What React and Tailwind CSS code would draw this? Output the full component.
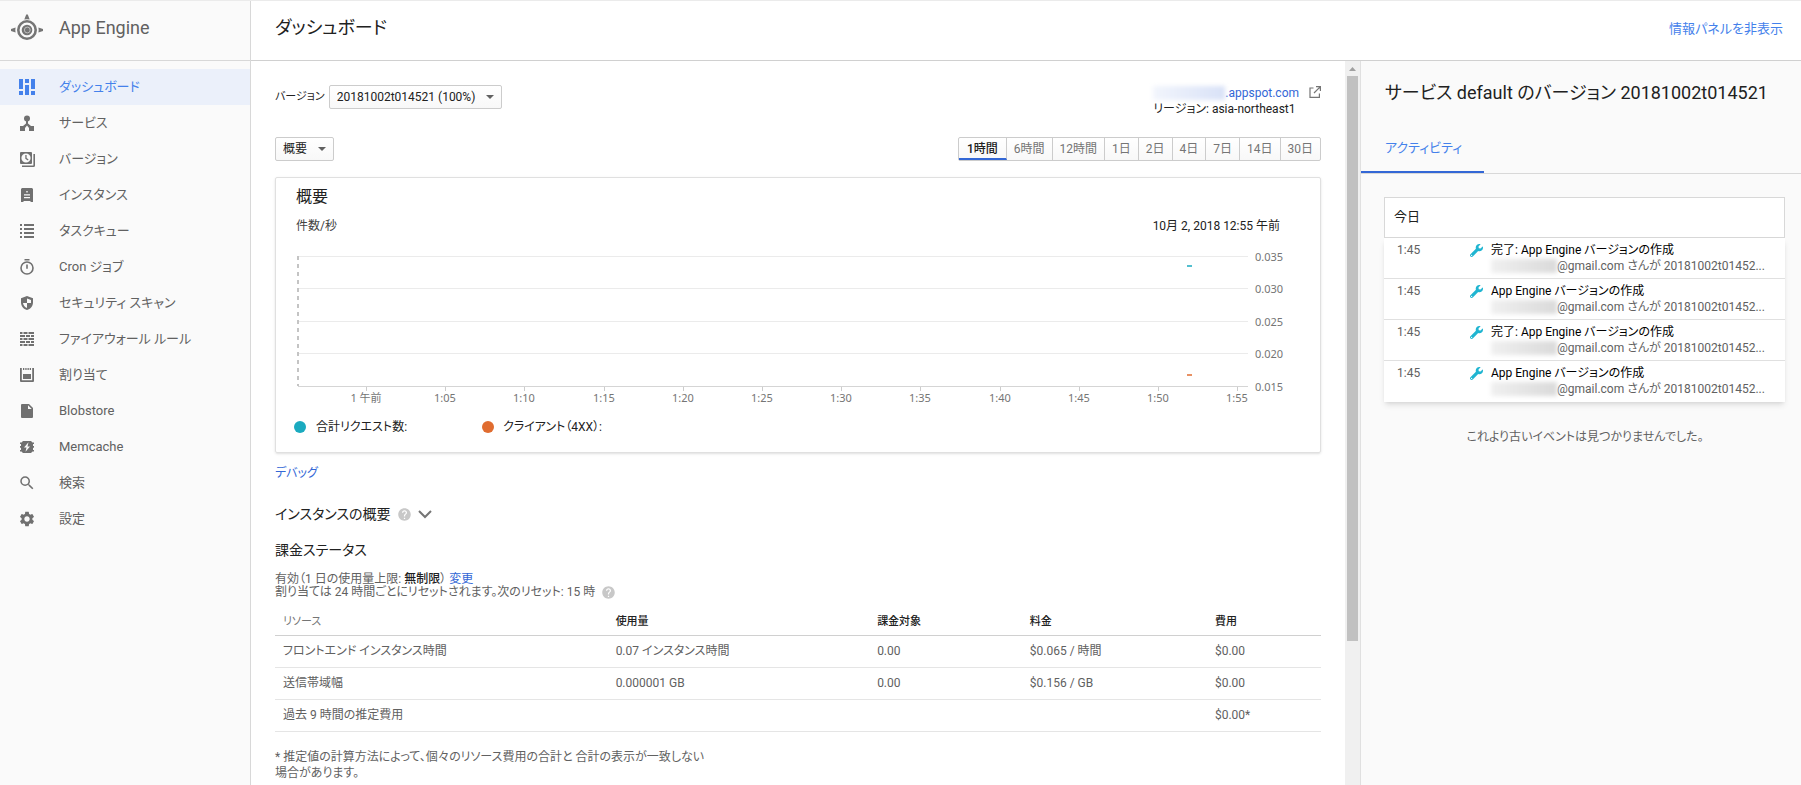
import React from 'react';
import { MdSearch, MdSettings, MdHelp } from 'react-icons/md';
import { FaWrench } from 'react-icons/fa';

function Icon({ children }) {
  return (
    <svg className="w-4 h-4 shrink-0" viewBox="0 0 16 16" fill="currentColor">
      {children}
    </svg>
  );
}

const icons = {
  dashboard: (
    <Icon>
      <path d="M0 0h4v10H0zM0 12h4v4H0zM6 0h4v4H6zM6 6h4v10H6zM12 0h4v10h-4zM12 12h4v4h-4z" />
    </Icon>
  ),
  services: (
    <Icon>
      <circle cx="8" cy="3.5" r="3" />
      <path d="M7 5.5h2v3l3 2.500h3v5h-5v-3L8 10.500 6 13v3H1v-5h3l3-2.500z" />
    </Icon>
  ),
  versions: (
    <Icon>
      <path
        fillRule="evenodd"
        d="M2 1h10a1 1 0 0 1 1 1v10a1 1 0 0 1-1 1H2a1 1 0 0 1-1-1V2a1 1 0 0 1 1-1zM7 2.4a4.6 4.6 0 1 0 0 9.2 4.6 4.6 0 0 0 0-9.2z"
      />
      <path d="M14.4 3H16v11.5a1.5 1.5 0 0 1-1.5 1.5H3v-1.6h11.4z" />
      <path d="M6.3 4h1.3v3l2 1.6-.8 1L6.3 7.7z" />
    </Icon>
  ),
  instances: (
    <Icon>
      <path
        fillRule="evenodd"
        d="M3 1h10l1 1v13h-2l-1-1H5l-1 1H2V2zM7.3 4v1.4h1.4V4zM5 7.3v1.2h6V7.3zM5 10v1.2h6V10z"
      />
    </Icon>
  ),
  queues: (
    <Icon>
      <path d="M1 1h2v2H1zM5 1h10v2H5zM1 5h2v2H1zM5 5h10v2H5zM1 9h2v2H1zM5 9h10v2H5zM1 13h2v2H1zM5 13h10v2H5z" />
    </Icon>
  ),
  cron: (
    <Icon>
      <circle cx="8" cy="9" r="6" fill="none" stroke="currentColor" strokeWidth="1.6" />
      <path d="M5.5 0h5v1.5h-5zM7.2 5.5h1.6v4.3H7.2z" />
    </Icon>
  ),
  security: (
    <Icon>
      <path
        fillRule="evenodd"
        d="M8 1l6 2.3v4.2c0 3.6-2.500 6.500-6 7.500-3.500-1-6-3.900-6-7.500V3.300zM8 3.500v4.500H4c.2 2.200 1.800 4.200 4 5V8h4V5z"
      />
    </Icon>
  ),
  firewall: (
    <Icon>
      <path d="M1 1h2.500v2H1zM4.500 1h4v2h-4zM9.500 1H15v2H9.500zM1 4h5v2H1zM7 4h4v2H7zM12 4h3v2h-3zM1 7h2.500v2H1zM4.500 7h4v2h-4zM9.500 7H15v2H9.500zM1 10h5v2H1zM7 10h4v2H7zM12 10h3v2h-3zM1 13h2.500v2H1zM4.500 13h4v2h-4zM9.500 13H15v2H9.500z" />
    </Icon>
  ),
  quotas: (
    <Icon>
      <path d="M1 1h1.800v12.200h10.400V1H15v13a1 1 0 0 1-1 1H2a1 1 0 0 1-1-1zM4 7h8v5H4zM4 1h1.300v2H4zM6.300 1h1.300v2H6.300zM8.500 1h1.300v2H8.500zM10.700 1H12v2h-1.300z" />
    </Icon>
  ),
  blobstore: (
    <Icon>
      <path fillRule="evenodd" d="M3 1h7l4 4v9a1 1 0 0 1-1 1H3a1 1 0 0 1-1-1V2a1 1 0 0 1 1-1zM9 2.300V6h3.700z" />
    </Icon>
  ),
  memcache: (
    <Icon>
      <path
        fillRule="evenodd"
        d="M4 2h8l1.500 1.500H15V5h-1v2h1v1.700h-1v2.300h1v1.500h-1.500L12 14H4l-1.500-1.500H1V11h1V8.700H1V7h1V5H1V3.500h1.500zM9.500 3.200L5 8.600h2.500l-1 4.200L11 7.400H8.500z"
      />
    </Icon>
  ),
  search: <MdSearch className="w-[18px] h-[18px] -mx-px shrink-0 stroke-current" />,
  settings: <MdSettings className="w-[18px] h-[18px] -mx-px shrink-0" />,
};

const menu = [
  { icon: 'dashboard', label: 'ダッシュボード', active: true },
  { icon: 'services', label: 'サービス' },
  { icon: 'versions', label: 'バージョン' },
  { icon: 'instances', label: 'インスタンス' },
  { icon: 'queues', label: 'タスクキュー' },
  { icon: 'cron', label: 'Cron ジョブ' },
  { icon: 'security', label: 'セキュリティ スキャン' },
  { icon: 'firewall', label: 'ファイアウォール ルール' },
  { icon: 'quotas', label: '割り当て' },
  { icon: 'blobstore', label: 'Blobstore' },
  { icon: 'memcache', label: 'Memcache' },
  { icon: 'search', label: '検索' },
  { icon: 'settings', label: '設定' },
];

const ranges = ['1時間', '6時間', '12時間', '1日', '2日', '4日', '7日', '14日', '30日'];

const yTicks = [
  { y: 8, label: '0.035' },
  { y: 40, label: '0.030' },
  { y: 73, label: '0.025' },
  { y: 105, label: '0.020' },
  { y: 138, label: '0.015' },
];

const xTicks = ['1 午前', '1:05', '1:10', '1:15', '1:20', '1:25', '1:30', '1:35', '1:40', '1:45', '1:50', '1:55'];

const resources = [
  ['フロントエンド インスタンス時間', '0.07 インスタンス時間', '0.00', '$0.065 / 時間', '$0.00'],
  ['送信帯域幅', '0.000001 GB', '0.00', '$0.156 / GB', '$0.00'],
  ['過去 9 時間の推定費用', '', '', '', '$0.00*'],
];

const events = [
  '完了: App Engine バージョンの作成',
  'App Engine バージョンの作成',
  '完了: App Engine バージョンの作成',
  'App Engine バージョンの作成',
];

function Logo() {
  return (
    <svg className="w-8 h-7 shrink-0 text-[#757575]" viewBox="0 0 32 28" fill="currentColor">
      <circle cx="16" cy="16" r="8.700" fill="none" stroke="currentColor" strokeWidth="2.600" />
      <circle cx="16" cy="16" r="5.300" />
      <circle cx="16.300" cy="16" r="2.900" fill="none" stroke="#d0d0d0" strokeWidth="0.800" />
      <path d="M15.200 0.500h1.600l1.900 5a11 11 0 0 0-5.400 0z" />
      <path d="M0 15l4.600-1.500a11 11 0 0 0 0 5L0 17z" />
      <path d="M32 15l-4.600-1.500a11 11 0 0 1 0 5L32 17z" />
    </svg>
  );
}

function Dropdown({ id, label, value }) {
  return (
    <div className="relative">
      <select
        id={id}
        aria-label={label}
        className="block appearance-none h-6 pl-[7px] pr-[25px] text-xs text-[#212121] border border-[#ccc] rounded-xs bg-linear-to-b from-white to-[#f8f8f8]"
      >
        <option>{value}</option>
      </select>
      <svg className="absolute right-2 top-[10px] w-2 h-1 pointer-events-none" viewBox="0 0 8 4">
        <path d="M0 0h8L4 4z" fill="#616161" />
      </svg>
    </div>
  );
}

function Chart() {
  return (
    <svg className="block w-full h-auto mt-[14px]" viewBox="0 0 1044 158">
      <g fontSize="11" fill="#757575" className="font-['Noto_Sans','Noto_Sans_CJK_JP',sans-serif]">
        {yTicks.map((tick) => (
          <g key={tick.label}>
            <rect x="22" y={tick.y} width="950" height="1" fill={tick.y === 138 ? '#d5d5d5' : '#ebebeb'} />
            <text x="979" y={tick.y + 5}>
              {tick.label}
            </text>
          </g>
        ))}
        {xTicks.map((label, i) => {
          const x = Math.round(90 + i * 79.2);
          return (
            <g key={label}>
              <rect x={x} y="139" width="1" height="4" fill="#ccc" />
              <text x={x} y="154" textAnchor="middle">
                {label}
              </text>
            </g>
          );
        })}
      </g>
      <path d="M22 8v130" stroke="#c4c4c4" strokeWidth="2" strokeDasharray="4 4" />
      <path d="M911 18h5" stroke="#1aaabf" strokeWidth="1.500" />
      <path d="M911 127h5" stroke="#e06c30" strokeWidth="1.500" />
    </svg>
  );
}

function Sidebar() {
  return (
    <aside className="w-[251px] shrink-0 bg-[#fafafa] border-r border-[#d8d8d8]">
      <div className="flex items-center gap-4 h-[60px] pl-[11px] pb-[6px] border-b border-[#d8d8d8]">
        <Logo />
        <h2 className="text-lg text-[#616161]">App Engine</h2>
      </div>
      <nav className="pt-2">
        {menu.map((item) => (
          <a
            key={item.label}
            href="#"
            className={
              item.active
                ? 'flex items-center gap-6 h-9 pl-[19px] pb-px text-[13px] text-[#4481eb] bg-[#ebf0fa]'
                : 'flex items-center gap-6 h-9 pl-[19px] pb-px text-[13px] text-[#616161]'
            }
          >
            <span className={item.active ? 'text-[#4481eb]' : 'text-[#707070]'}>{icons[item.icon]}</span>
            {item.label}
          </a>
        ))}
      </nav>
    </aside>
  );
}

function Billing() {
  return (
    <section>
      <h3 className="mt-4 text-sm leading-5 text-[#212121]">課金ステータス</h3>
      <div className="mt-[13px] leading-[13px]">
        <p>
          有効（1 日の使用量上限: <b className="font-medium text-[#212121]">無制限</b>）{' '}
          <a href="#" className="text-[#3367d6]">
            変更
          </a>
        </p>
        <p className="flex items-center gap-[6px]">
          割り当ては 24 時間ごとにリセットされます。次のリセット: 15 時
          <MdHelp className="w-[15px] h-[15px] -my-1 text-[#c8c8c8]" />
        </p>
      </div>
      <table className="w-full mt-[10px] table-fixed text-left">
        <colgroup>
          <col className="w-[31.8%]" />
          <col className="w-[25%]" />
          <col className="w-[14.6%]" />
          <col className="w-[17.7%]" />
          <col />
        </colgroup>
        <thead>
          <tr className="h-[26px] border-b border-[#d0d0d0] text-[11px] text-[#212121]">
            <th className="px-2 font-normal text-[#757575]">リソース</th>
            <th className="px-2 font-medium">使用量</th>
            <th className="px-2 font-medium">課金対象</th>
            <th className="px-2 font-medium">料金</th>
            <th className="px-2 font-medium">費用</th>
          </tr>
        </thead>
        <tbody>
          {resources.map((row) => (
            <tr key={row[0]} className="h-8 border-b border-[#e5e5e5]">
              {row.map((cell, i) => (
                <td key={i} className="px-2">
                  {cell}
                </td>
              ))}
            </tr>
          ))}
        </tbody>
      </table>
      <p className="mt-[17px]">
        * 推定値の計算方法によって、個々のリソース費用の合計と 合計の表示が一致しない
        <br />
        場合があります。
      </p>
    </section>
  );
}

function Dashboard() {
  return (
    <main className="flex-1 min-w-0 px-6 pt-6 pb-1 text-xs leading-4 text-[#616161]">
      <div className="flex items-start justify-between">
        <div className="flex items-center gap-1">
          <label htmlFor="version" className="text-[11px] text-[#212121]">
            バージョン
          </label>
          <Dropdown id="version" value="20181002t014521 (100%)" />
        </div>
        <div className="flex gap-[10px]">
          <div className="text-[#212121]">
            <a href="#" className="flex items-center text-[#3367d6]">
              <span className="w-[72px] h-[14px] bg-linear-to-r from-[#f2f5fc] to-[#d9e2f7] blur-[2px]" />
              .appspot.com
            </a>
            <p>リージョン: asia-northeast1</p>
          </div>
          <svg className="w-3 h-3 mt-px" viewBox="0 0 12 12" fill="none" stroke="#757575" strokeWidth="1.200">
            <path d="M4.500 2H1v9.400h9.400V7.500M7 .6h4.400V5M11.400.6L5 7" />
          </svg>
        </div>
      </div>

      <div className="flex items-center justify-between mt-5">
        <Dropdown id="metric" label="指標" value="概要" />
        <div className="flex h-6 border border-[#ccc] rounded-xs divide-x divide-[#ccc] bg-linear-to-b from-white to-[#f8f8f8]">
          {ranges.map((range, i) => (
            <button
              key={range}
              className={
                i === 0
                  ? 'px-2 pt-[2px] font-medium text-[#212121] border-b-2 border-b-[#3367d6]'
                  : 'px-[7px] text-[#757575]'
              }
            >
              {range}
            </button>
          ))}
        </div>
      </div>

      <section className="mt-4 pt-[7px] pb-[17px] border border-[#e0e0e0] rounded-xs shadow-sm">
        <h3 className="px-5 text-base leading-6 text-[#212121]">概要</h3>
        <div className="flex justify-between mt-[9px] pl-5 pr-10 text-[#424242]">
          <span>件数/秒</span>
          <span className="text-[#212121]">10月 2, 2018 12:55 午前</span>
        </div>
        <Chart />
        <div className="flex mt-[13px] pl-[18px] text-[#212121]">
          <span className="flex items-center gap-[10px] w-[188px]">
            <i className="w-3 h-3 rounded-full bg-[#1aaabf]" />
            合計リクエスト数:
          </span>
          <span className="flex items-center gap-[9px]">
            <i className="w-3 h-3 rounded-full bg-[#e06c30]" />
            クライアント（4XX）:
          </span>
        </div>
      </section>

      <a href="#" className="block mt-3 text-[#3367d6]">
        デバッグ
      </a>

      <div className="flex items-center gap-[6px] mt-[23px]">
        <h3 className="text-sm leading-5 text-[#212121]">インスタンスの概要</h3>
        <MdHelp className="w-[15px] h-[15px] text-[#c8c8c8]" />
        <svg className="w-[14px] h-[14px]" viewBox="0 0 14 14" fill="none" stroke="#757575" strokeWidth="2">
          <path d="M1 4l6 6 6-6" />
        </svg>
      </div>

      <Billing />
    </main>
  );
}

function Scrollbar() {
  return (
    <div className="flex flex-col items-center w-[15px] shrink-0 bg-[#f0f0f0]">
      <svg className="w-[7px] h-[15px] shrink-0" viewBox="0 0 7 15">
        <path d="M0 10h7L3.500 6z" fill="#a0a0a0" />
      </svg>
      <div className="w-[11px] h-[78%] bg-[#c1c1c1]" />
    </div>
  );
}

function InfoPanel() {
  return (
    <aside className="w-[441px] shrink-0 border-l border-[#e0e0e0] bg-[#fafafa] text-xs leading-4">
      <h2 className="pt-5 pl-6 text-lg leading-6 text-[#212121]">サービス default のバージョン 20181002t014521</h2>
      <div className="flex mt-5 border-b border-[#d8d8d8]">
        <button className="h-12 pl-6 pr-[22px] text-[13px] text-[#4481eb] border-b-2 border-[#3367d6]">
          アクティビティ
        </button>
      </div>
      <div className="mt-[23px] ml-[23px] mr-4">
        <h3 className="flex items-center h-[41px] pl-[9px] pb-px text-[13px] text-[#212121] bg-white border border-[#d8d8d8]">
          今日
        </h3>
        <ul className="bg-white divide-y divide-[#e0e0e0] shadow-md">
          {events.map((title, i) => (
            <li key={i} className="flex h-[41px] pt-1 pl-[13px]">
              <span className="w-[73px] text-[#616161]">1:45</span>
              <FaWrench className="w-[13px] h-[13px] mt-[2px] mr-2 text-[#1fb5d1]" />
              <div>
                <p className="text-[#000]">{title}</p>
                <p className="flex items-center text-[#616161]">
                  <span className="w-[66px] h-[14px] bg-linear-to-r from-[#f0f0f0] to-[#dadada] blur-[2px]" />
                  @gmail.com さんが 20181002t01452...
                </p>
              </div>
            </li>
          ))}
        </ul>
      </div>
      <p className="mt-[27px] text-center text-[#616161] pl-2">これより古いイベントは見つかりませんでした。</p>
    </aside>
  );
}

function App() {
  return (
    <div className="flex min-h-screen bg-white border-t border-[#ebebeb] font-[Roboto,'Noto_Sans_CJK_JP',sans-serif] [font-feature-settings:'palt']">
      <Sidebar />
      <div className="flex flex-col flex-1 min-w-0">
        <header className="flex items-center justify-between h-[60px] pl-6 pr-[18px] pb-1 border-b border-[#d0d0d0]">
          <h1 className="pb-[2px] text-lg text-[#212121]">ダッシュボード</h1>
          <a href="#" className="text-[13px] text-[#4481eb]">
            情報パネルを非表示
          </a>
        </header>
        <div className="flex flex-1">
          <Dashboard />
          <Scrollbar />
          <InfoPanel />
        </div>
      </div>
    </div>
  );
}

export default App;
